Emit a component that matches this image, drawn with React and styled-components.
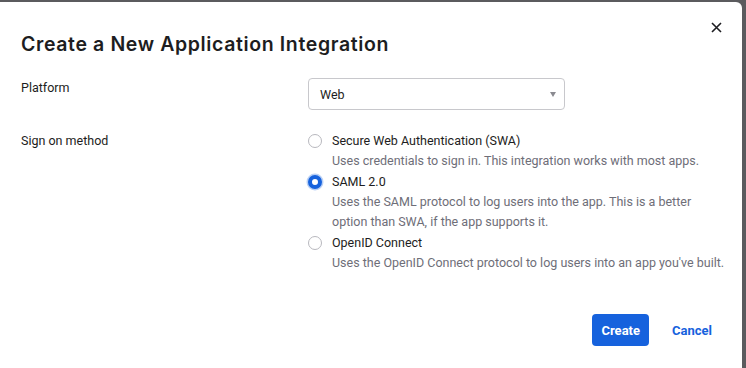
import styled, { createGlobalStyle } from "styled-components";

const Global = createGlobalStyle`
  html, body {
    margin: 0;
    padding: 0;
    background: #5b5b5e;
    font-family: Roboto, "Noto Sans", sans-serif;
    color: #1d1d21;
  }
  * { box-sizing: border-box; }
`;

const Overlay = styled.div`
  width: 746px;
  height: 368px;
  padding: 2px 4px 0 0;
  overflow: hidden;
`;

const Modal = styled.div`
  position: relative;
  width: 742px;
  height: 380px;
  background: #fff;
  border-top-right-radius: 6px;
  padding: 28px 0 0 21px;
`;

const Close = styled.button`
  position: absolute;
  top: 17px;
  right: 18px;
  width: 16px;
  height: 16px;
  padding: 0;
  border: none;
  background: none;
  display: flex;
  align-items: center;
  justify-content: center;
  cursor: pointer;
`;

const Title = styled.h1`
  margin: 0 0 20px;
  font-family: Inter, "Noto Sans", sans-serif;
  font-size: 19.5px;
  font-weight: 600;
  line-height: 28px;
  letter-spacing: 0.62px;
`;

const Row = styled.div`
  display: grid;
  grid-template-columns: 287px 1fr;
  margin-bottom: ${(p) => p.$gap || 0}px;
`;

const Label = styled.div`
  font-size: 12.5px;
  line-height: 20px;
`;

const Select = styled.div`
  width: 257px;
  height: 32px;
  border: 1px solid #c8c8cc;
  border-radius: 4px;
  display: flex;
  align-items: center;
  justify-content: space-between;
  padding: 0 8px 0 11px;
  font-size: 12.5px;
`;

const Caret = styled.span`
  width: 0;
  height: 0;
  border-left: 3.5px solid transparent;
  border-right: 3.5px solid transparent;
  border-top: 5px solid #8a8a90;
`;

const Options = styled.div`
  display: flex;
  flex-direction: column;
`;

const Option = styled.div`
  display: grid;
  grid-template-columns: 24px 1fr;
  margin-bottom: 1px;
`;

const Radio = styled.span`
  width: 14px;
  height: 14px;
  margin-top: 3px;
  border-radius: 50%;
  border: ${(p) => (p.$checked ? "4px solid #1662dd" : "1px solid #b8b8be")};
  background: #fff;
  box-shadow: ${(p) => (p.$checked ? "0 0 0 1.5px rgba(22,98,221,0.3)" : "none")};
`;

const OptionTitle = styled.div`
  font-size: 12.5px;
  line-height: 20px;
`;

const OptionDesc = styled.div`
  grid-column: 2;
  font-size: 12.5px;
  line-height: 20px;
  color: #6e6e78;
  max-width: 395px;
`;

const Footer = styled.div`
  display: flex;
  justify-content: flex-end;
  align-items: center;
  gap: 23px;
  padding-right: 30px;
  margin-top: 40px;
`;

const Primary = styled.button`
  height: 32px;
  padding: 0 9px;
  border: none;
  border-radius: 4px;
  background: #1662dd;
  color: #fff;
  font-family: inherit;
  font-size: 13px;
  font-weight: 700;
`;

const Link = styled.button`
  border: none;
  background: none;
  padding: 0;
  color: #1662dd;
  font-family: inherit;
  font-size: 13px;
  font-weight: 700;
`;

const options = [
  {
    title: "Secure Web Authentication (SWA)",
    desc: "Uses credentials to sign in. This integration works with most apps.",
  },
  {
    title: "SAML 2.0",
    desc: "Uses the SAML protocol to log users into the app. This is a better option than SWA, if the app supports it.",
    checked: true,
  },
  {
    title: "OpenID Connect",
    desc: "Uses the OpenID Connect protocol to log users into an app you've built.",
  },
];

export default function App() {
  return (
    <>
      <Global />
      <Overlay>
        <Modal>
          <Close aria-label="Close">
            <svg width="11" height="11" viewBox="0 0 11 11">
              <path d="M1 1L10 10M10 1L1 10" stroke="#1d1d21" strokeWidth="1.6" />
            </svg>
          </Close>
          <Title>Create a New Application Integration</Title>
          <Row $gap={21}>
            <Label>Platform</Label>
            <Select>
              <span>Web</span>
              <Caret />
            </Select>
          </Row>
          <Row>
            <Label>Sign on method</Label>
            <Options>
              {options.map((o) => (
                <Option key={o.title}>
                  <Radio $checked={o.checked} />
                  <OptionTitle>{o.title}</OptionTitle>
                  <OptionDesc>{o.desc}</OptionDesc>
                </Option>
              ))}
            </Options>
          </Row>
          <Footer>
            <Primary>Create</Primary>
            <Link>Cancel</Link>
          </Footer>
        </Modal>
      </Overlay>
    </>
  );
}
